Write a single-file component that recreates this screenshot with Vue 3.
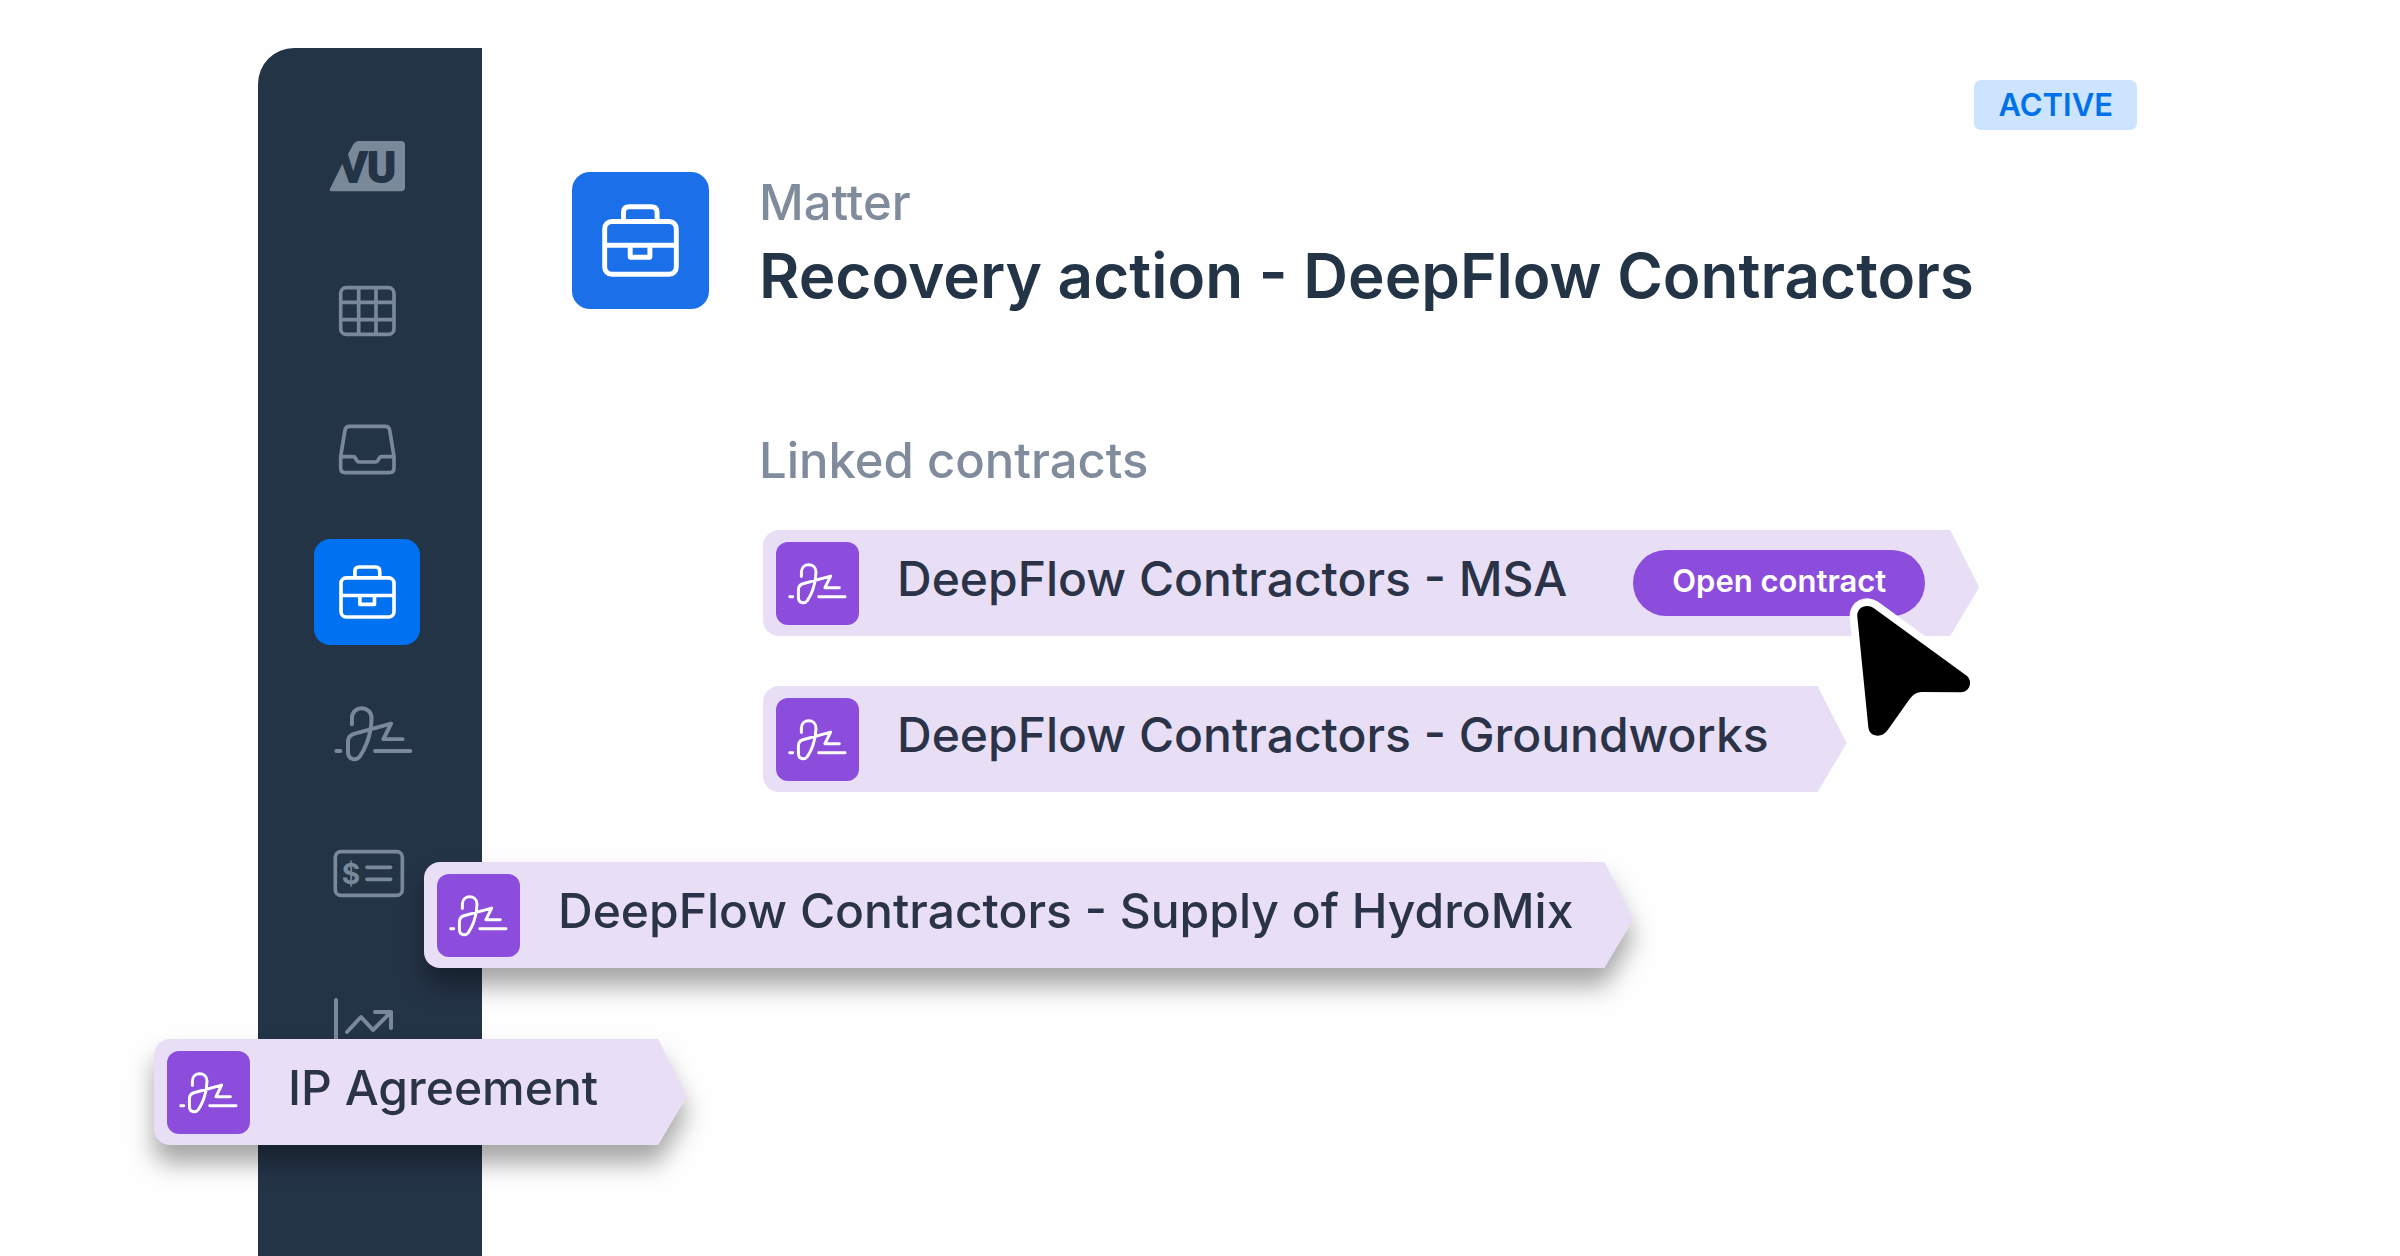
<template>
  <div class="page">
    <!-- shared icon artwork -->
    <svg class="sprite" aria-hidden="true">
      <symbol id="icon-grid" viewBox="243 741 276 198">
        <g fill="none" stroke="currentColor" stroke-width="11">
          <rect x="302" y="773" width="160" height="140" rx="17" />
          <path d="M356 773V913M408 773V913M302 817H462M302 869H462" />
        </g>
      </symbol>
      <symbol id="icon-inbox" viewBox="93 54 276 198">
        <g fill="none" stroke="currentColor" stroke-width="11" stroke-linejoin="round">
          <path d="M178 79H286Q297 79 299 90L312 169V204Q312 218 298 218H166Q152 218 152 204V169L165 90Q167 79 178 79Z" />
          <path d="M152 170H190Q194 170 196 174L200 181Q203 186 208 186H256Q261 186 264 181L268 174Q270 170 274 170H312" />
        </g>
      </symbol>
      <symbol id="icon-briefcase" viewBox="146 495 172 163">
        <g fill="none" stroke="currentColor" stroke-width="11" stroke-linejoin="round">
          <rect x="152" y="534" width="160" height="118" rx="16" />
          <path d="M194 534V514Q194 501 207 501H256Q269 501 269 514V534M152 587H312M209 587V614H253V587" />
        </g>
      </symbol>
      <symbol id="icon-sign" viewBox="130 72 238 172">
        <path
          fill="none"
          stroke="currentColor"
          stroke-width="12"
          stroke-linecap="round"
          stroke-linejoin="round"
          d="M184 130V112C184 72 243 72 243 112C243 166 220 210 208 227C198 240 172 240 172 212V184C172 168 180 162 190 159L302 128L279 175H337M254 211H360M137 211H149"
        />
      </symbol>
      <symbol id="icon-billing" viewBox="93 483 276 198">
        <g fill="none" stroke="currentColor" stroke-width="11" stroke-linecap="round">
          <rect x="136" y="515" width="201" height="131" rx="17" />
          <path d="M231 562H302M231 598H302" />
        </g>
      </symbol>
      <symbol id="icon-chart" viewBox="321 982 92 66">
        <g fill="none" stroke="currentColor" stroke-width="4" stroke-linecap="round" stroke-linejoin="round">
          <path d="M336 1000V1046H394" />
          <path d="M347 1032L361 1017L373 1030L391 1012M375 1012H391V1028" />
        </g>
      </symbol>
    </svg>

    <nav class="sidebar" aria-label="Main">
      <a href="#" class="logo" aria-label="Home">
        <svg viewBox="243 309 276 198">
          <path d="M341 341Q346 333 356 333H483Q495 333 495 345V472Q495 484 483 484H274Q267 484 270 476L307 402L322 376Z" fill="currentColor" />
          <text x="382" y="457" text-anchor="middle" class="logo-letters">VU</text>
        </svg>
      </a>
      <a
        v-for="item in navItems"
        :key="item.icon"
        href="#"
        class="nav-item"
        :class="{ active: item.active }"
        :aria-label="item.label"
      >
        <svg :class="`glyph-${item.icon}`">
          <use :href="`#icon-${item.icon}`" />
          <text v-if="item.icon === 'billing'" x="30" y="43" text-anchor="middle" class="dollar">$</text>
        </svg>
      </a>
    </nav>

    <main class="content">
      <span class="badge">ACTIVE</span>

      <header class="matter">
        <div class="matter-icon">
          <svg><use href="#icon-briefcase" /></svg>
        </div>
        <div>
          <p class="muted">Matter</p>
          <h1>Recovery action - DeepFlow Contractors</h1>
        </div>
      </header>

      <section class="linked">
        <h2 class="muted">Linked contracts</h2>
        <ul>
          <li v-for="contract in linked" :key="contract.name" class="chip">
            <span class="chip-icon"><svg><use href="#icon-sign" /></svg></span>
            <span class="chip-label">{{ contract.name }}</span>
            <button v-if="contract.hovered" type="button" class="open">
              Open contract
              <svg class="cursor" viewBox="320 15 400 450" aria-hidden="true">
                <path :d="cursorPath" fill="#fff" stroke="#fff" stroke-width="46" stroke-linejoin="round" />
                <path :d="cursorPath" fill="#000" />
              </svg>
            </button>
          </li>
        </ul>
      </section>
    </main>

    <div
      v-for="contract in dragged"
      :key="contract.name"
      class="chip floating"
      :class="contract.spot"
    >
      <span class="chip-icon"><svg><use href="#icon-sign" /></svg></span>
      <span class="chip-label">{{ contract.name }}</span>
    </div>
  </div>
</template>

<script setup>
const navItems = [
  { icon: 'grid', label: 'Tables' },
  { icon: 'inbox', label: 'Inbox' },
  { icon: 'briefcase', label: 'Matters', active: true },
  { icon: 'sign', label: 'Contracts' },
  { icon: 'billing', label: 'Billing' },
  { icon: 'chart', label: 'Reports' },
];

const linked = [
  { name: 'DeepFlow Contractors - MSA', hovered: true },
  { name: 'DeepFlow Contractors - Groundworks' },
];

const dragged = [
  { name: 'DeepFlow Contractors - Supply of HydroMix', spot: 'spot-supply' },
  { name: 'IP Agreement', spot: 'spot-ip' },
];

const cursorPath =
  'M354 76C352 48 382 36 404 51L681 253C704 270 692 304 666 304L548 303C532 303 521 312 511 325L446 417C430 444 389 440 387 408Z';
</script>

<style>
body {
  margin: 0;
  background: #fefefe;
}
</style>

<style scoped>
.page {
  position: relative;
  display: flex;
  box-sizing: border-box;
  min-height: 100vh;
  padding-left: 258px;
  overflow: hidden;
  color: #243447;
  font-family: Inter, "Liberation Sans", sans-serif;
}
.sprite {
  position: absolute;
  width: 0;
  height: 0;
}

.sidebar {
  display: flex;
  flex-direction: column;
  gap: 35px;
  box-sizing: border-box;
  width: 224px;
  margin-top: 48px;
  padding: 65px 0 0 56px;
  border-top-left-radius: 36px;
  background: #243447;
}
.logo,
.nav-item {
  display: flex;
  align-items: center;
  justify-content: center;
  width: 106px;
  height: 106px;
  border-radius: 16px;
  color: #7a899a;
}
.logo {
  margin-bottom: 3px;
}
.logo svg,
.nav-item svg {
  width: 92px;
  height: 66px;
}
.nav-item.active {
  background: #0071f0;
  color: #fff;
}
.nav-item .glyph-briefcase {
  width: 57px;
  height: 54px;
}
.nav-item .glyph-sign {
  width: 79px;
  height: 57px;
  padding-left: 12px;
}
.logo-letters {
  fill: #243447;
  stroke: #243447;
  stroke-width: 6px;
  stroke-linejoin: round;
  font-family: Roboto, sans-serif;
  font-size: 130px;
  font-weight: 700;
}
.dollar {
  fill: currentColor;
  font-size: 28px;
  font-weight: 700;
}

.content {
  display: flex;
  flex: 1;
  flex-direction: column;
  padding: 80px 263px 0 90px;
}
.badge {
  align-self: flex-end;
  padding: 0 24px;
  border-radius: 7px;
  background: #cce4fd;
  color: #0071ea;
  font-size: 31px;
  font-weight: 600;
  line-height: 50px;
}
.matter {
  display: flex;
  gap: 50px;
  margin-top: 42px;
}
.matter-icon {
  display: flex;
  align-items: center;
  justify-content: center;
  width: 137px;
  height: 137px;
  border-radius: 18px;
  background: #1b70e9;
  color: #fff;
}
.matter-icon svg {
  width: 77px;
  height: 73px;
}
.muted {
  margin: 0;
  color: #808b9b;
  font-size: 49px;
  font-weight: 500;
  line-height: 62px;
}
h1 {
  margin: 0;
  font-size: 62px;
  font-weight: 600;
  line-height: 84px;
}
.linked {
  margin-top: 112px;
  padding-left: 187px;
}
ul {
  display: flex;
  flex-direction: column;
  align-items: flex-start;
  gap: 50px;
  margin: 38px 0 0;
  padding: 0 0 0 4px;
  list-style: none;
}

.chip {
  position: relative;
  display: flex;
  align-items: center;
  box-sizing: border-box;
  height: 106px;
  padding: 0 78px 0 13px;
  white-space: nowrap;
}
.chip::before {
  content: '';
  position: absolute;
  inset: 0;
  z-index: -1;
  border-radius: 16px 0 0 16px;
  background: #e8def6;
  clip-path: polygon(0 0, calc(100% - 29px) 0, 100% 54%, calc(100% - 29px) 100%, 0 100%);
}
.chip:has(.open) {
  z-index: 1;
  padding-right: 54px;
}
.chip-icon {
  display: flex;
  align-items: center;
  justify-content: center;
  width: 83px;
  height: 83px;
  border-radius: 12px;
  background: #8c4ddd;
  color: #fff;
}
.chip-icon svg {
  width: 59px;
  height: 43px;
}
.chip-label {
  padding: 0 0 10px 38px;
  color: #2a3347;
  font-size: 48px;
  font-weight: 500;
}
.open {
  position: relative;
  height: 66px;
  margin-left: 66px;
  padding: 0 39px 5px;
  border: 0;
  border-radius: 33px;
  background: #8c4ddd;
  color: #fff;
  font: 600 31px Inter, "Liberation Sans", sans-serif;
}
.cursor {
  position: absolute;
  top: 46px;
  left: 213px;
  width: 133px;
  height: 150px;
  overflow: visible;
}
.floating {
  position: absolute;
  z-index: 2;
  filter: drop-shadow(0 18px 12px rgba(0, 0, 0, 0.35));
}
.spot-supply {
  top: 862px;
  left: 424px;
  padding-right: 60px;
}
.spot-ip {
  top: 1039px;
  left: 154px;
  padding-right: 89px;
}
</style>
